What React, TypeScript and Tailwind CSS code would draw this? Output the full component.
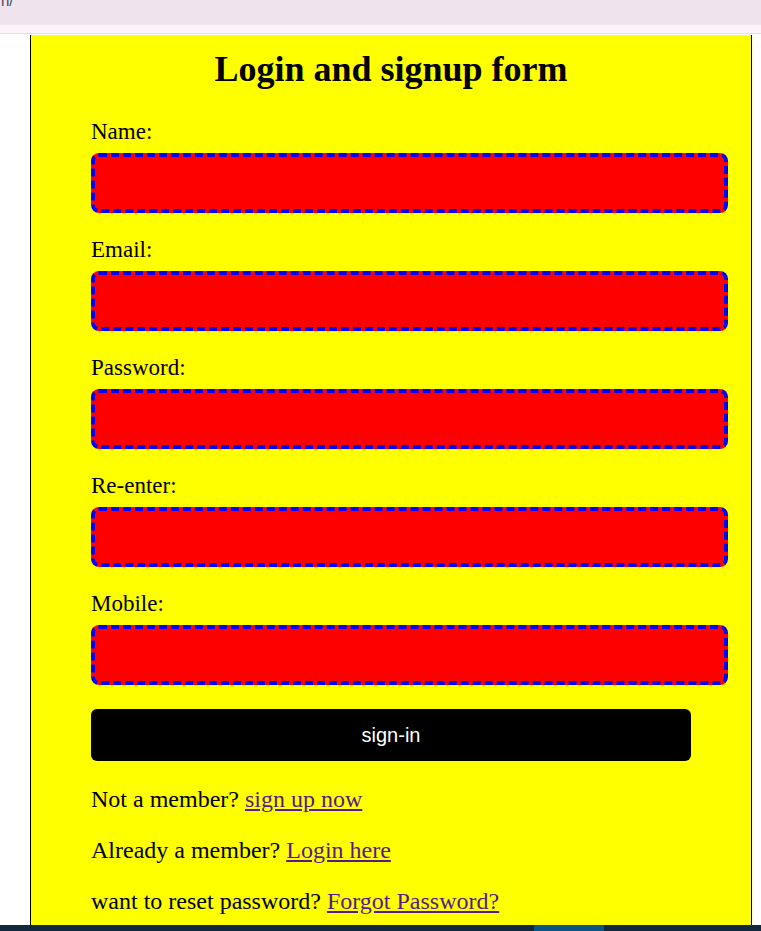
import React from 'react';

const FIELDS = ['Name:', 'Email:', 'Password:', 'Re-enter:', 'Mobile:'];

const LINKS = [
  { text: 'Not a member?', link: 'sign up now' },
  { text: 'Already a member?', link: 'Login here' },
  { text: 'want to reset password?', link: 'Forgot Password?' },
];

export default function App() {
  return (
    <div className="relative w-[761px] h-[931px] overflow-hidden bg-white font-['Liberation_Serif',serif] text-black">
      {/* browser chrome strip */}
      <div className="h-[25px] overflow-hidden bg-[#efe3ee] pl-[1px]">
        <span className="relative -top-[11px] font-['Liberation_Sans',sans-serif] text-[15px] text-[#3d4b5e]">n/</span>
      </div>
      <div className="h-[8px] bg-[#fdf3f8]" />
      <div className="h-[1px] bg-[#e9d9e6]" />
      <div className="h-[1px] bg-white" />

      <div className="pl-[30px]">
        <div className="w-[722px] min-h-[900px] border-x border-black bg-[#ffff00] px-[60px] pt-[14px]">
          <h1 className="text-center text-[36px] leading-[41px] font-bold">Login and signup form</h1>

          <form className="mt-[29px]" onSubmit={(e) => e.preventDefault()}>
            {FIELDS.map((label) => (
              <div key={label} className="mb-[24px]">
                <label className="block text-[23px] leading-[26px]">{label}</label>
                <input
                  type="text"
                  className="mt-[8px] block w-[637px] h-[60px] rounded-[8px] border-4 border-dashed border-[#0000ff] bg-[#ff0000] outline-none"
                />
              </div>
            ))}
            <button
              type="submit"
              className="block w-full h-[52px] rounded-[6px] bg-black text-white font-['Liberation_Sans',sans-serif] text-[20px]"
            >
              sign-in
            </button>
          </form>

          <div className="mt-[25px] flex flex-col gap-[25px] text-[24px] leading-[26px]">
            {LINKS.map(({ text, link }) => (
              <p key={link}>
                {text}{' '}
                <a href="#" className="text-[#551a8b] underline">{link}</a>
              </p>
            ))}
          </div>
        </div>
      </div>

      {/* taskbar edge */}
      <div className="absolute bottom-0 left-0 flex h-[6px] w-full bg-[#11293a]">
        <div className="ml-[534px] w-[70px] bg-[#0b5584]" />
      </div>
    </div>
  );
}
